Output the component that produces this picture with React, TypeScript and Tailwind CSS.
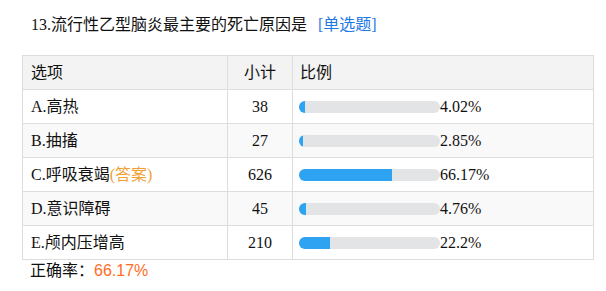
import React from "react";

type Row = { label: string; count: number; pct: number; answer?: boolean };

const rows: Row[] = [
  { label: "A.高热", count: 38, pct: 4.02 },
  { label: "B.抽搐", count: 27, pct: 2.85 },
  { label: "C.呼吸衰竭", count: 626, pct: 66.17, answer: true },
  { label: "D.意识障碍", count: 45, pct: 4.76 },
  { label: "E.颅内压增高", count: 210, pct: 22.2 },
];

const font = { fontFamily: '"Liberation Serif", "Noto Sans CJK SC", serif' };

export default function App() {
  return (
    <div className="w-[606px] h-[291px] bg-white text-[#111]" style={font}>
      <div className="pt-[15px] pl-[31px] h-[55px] text-[16px] leading-[20px]">
        13.流行性乙型脑炎最主要的死亡原因是
        <span className="ml-[11px] text-[#1e78e6]">[单选题]</span>
      </div>
      <table className="ml-[22px] w-[572px] border-collapse text-[16px] table-fixed">
        <colgroup>
          <col className="w-[205px]" />
          <col className="w-[65px]" />
          <col />
        </colgroup>
        <thead>
          <tr className="bg-[#f3f3f3] h-[34px]">
            <th className="border border-[#dddddd] text-left font-normal pl-[8px]">选项</th>
            <th className="border border-[#dddddd] text-center font-normal">小计</th>
            <th className="border border-[#dddddd] text-left font-normal pl-[7px]">比例</th>
          </tr>
        </thead>
        <tbody>
          {rows.map((r, i) => (
            <tr key={r.label} className={`h-[34px] ${i % 2 === 1 ? "bg-[#f9f9f9]" : "bg-white"}`}>
              <td className="border border-[#dddddd] pl-[8px]">
                {r.label}
                {r.answer && <span className="text-[#f0a035]">(答案)</span>}
              </td>
              <td className="border border-[#dddddd] text-center">{r.count}</td>
              <td className="border border-[#dddddd] pl-[6px]">
                <div className="flex items-center">
                  <div className="w-[141px] h-[12px] rounded-full bg-[#e3e4e5] overflow-hidden">
                    <div className="h-full bg-[#2ea3f2]" style={{ width: `${Math.max(r.pct, 3)}%` }} />
                  </div>
                  <span>{r.pct}%</span>
                </div>
              </td>
            </tr>
          ))}
        </tbody>
      </table>
      <div className="pl-[30px] pt-[1px] text-[16px] leading-[20px]">
        正确率：
        <span className="text-[#ff6d1f]" style={{ fontFamily: '"Liberation Sans", sans-serif' }}>
          66.17%
        </span>
      </div>
    </div>
  );
}
